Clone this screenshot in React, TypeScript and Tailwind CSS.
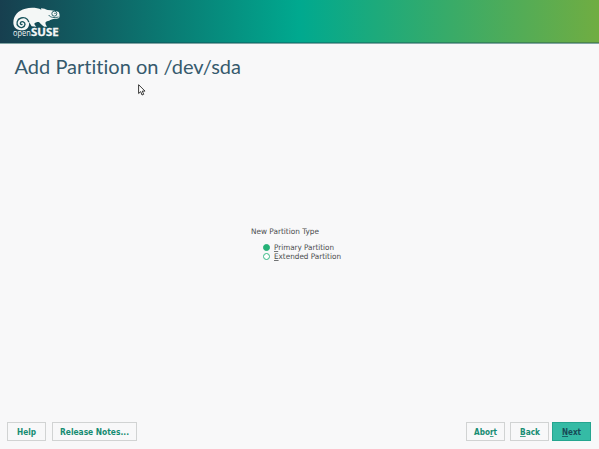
import React from 'react';

function Logo() {
  return (
    <svg className="block" width="70" height="43" viewBox="0 0 210 129" role="img" aria-label="openSUSE">
      <path
        fill="#f4f7f6"
        d="M40 68C40 47 54 31 76 26C92 22 112 23 124 29L123 25C131 25 137 28 143 30C156 31 170 33 176 36C179 41 180 50 177 54C170 58 158 55 151 60C147 64 140 63 137 66C135 71 138 76 141 80L133 80C127 77 121 71 117 66C110 66 104 68 103 71C104 75 107 77 109 80L95 79C92 75 91 71 87 67C89 79 82 90 69 91C51 92 40 82 40 68Z"
      />
      <path
        fill="none"
        stroke="#15525b"
        strokeWidth="4"
        strokeLinecap="round"
        d="M86 65C82 55 72 51 63 54C50 58 48 72 55 79C62 86 74 82 75 73C75 65 66 63 62 67C59 71 63 75 66 73"
      />
      <circle cx="163" cy="41" r="7.5" fill="none" stroke="#15525b" strokeWidth="2.6" />
      <circle cx="165" cy="40" r="2" fill="#15525b" />
      <path d="M146 45C151 53 163 54 176 51" fill="none" stroke="#15525b" strokeWidth="2.6" />
      <text x="39" y="107" textLength="53" lengthAdjust="spacingAndGlyphs" fill="#f4f7f6" className="font-['Open_Sans',sans-serif] text-[25px]">open</text>
      <text x="93" y="108" textLength="83" lengthAdjust="spacingAndGlyphs" fill="#f4f7f6" stroke="#f4f7f6" strokeWidth="0.8" className="font-['Open_Sans',sans-serif] text-[30px] font-bold">SUSE</text>
      <circle cx="179" cy="90" r="1" fill="#b9cfd0" />
    </svg>
  );
}

function Fit({ children, width, size = 8, bold = false }: { children: React.ReactNode; width: number; size?: number; bold?: boolean }) {
  return (
    <svg width={width} height="13" className="block overflow-visible" fill="currentColor">
      <text
        x="0"
        y={bold ? 10 : 9}
        textLength={width}
        lengthAdjust="spacingAndGlyphs"
        fontSize={size}
        className={bold ? "font-['DejaVu_Sans',sans-serif] font-bold" : "font-['DejaVu_Sans',sans-serif]"}
      >
        {children}
      </text>
    </svg>
  );
}

function Key({ children }: { children: string }) {
  return <tspan className="underline">{children}</tspan>;
}

function Button({ className, children }: { className: string; children: React.ReactNode }) {
  return (
    <button className={`flex h-[19px] items-center justify-center border ${className}`}>{children}</button>
  );
}

function Option({ selected = false, width, children }: { selected?: boolean; width: number; children: React.ReactNode }) {
  return (
    <label className="flex h-[9px] items-center gap-1">
      <span className={`size-[7px] rounded-full border-[1.5px] ${selected ? 'border-[#25b177] bg-[#25b177]' : 'border-[#36b985] bg-white'}`} />
      <Fit width={width} size={7.7}>{children}</Fit>
    </label>
  );
}

export default function App() {
  return (
    <div className="relative flex h-[449px] w-[599px] flex-col overflow-hidden bg-[#f8f8f9] text-[#4a4c4d]">
      <header className="h-11 shrink-0 border-b border-[#81a5a4] bg-[linear-gradient(90deg,#173f4f_0%,#00a98f_50%,#70ad42_100%)]">
        <div className="h-[43px] border-b border-[#173f4f]/35"><Logo /></div>
      </header>
      <h1 className="ml-[14px] mt-[7px] h-8 text-[#365a6d]">
        <svg width="228" height="32" className="block overflow-visible" fill="currentColor">
          <text x="0.5" y="22.5" textLength="226.5" lengthAdjust="spacingAndGlyphs" className="font-['Lato',sans-serif] text-[19.5px] [font-variant-ligatures:none]">
            Add Partition on /dev/sda
          </text>
        </svg>
      </h1>
      <main className="flex flex-1 flex-col pl-[251px] pt-[142px]">
        <Fit width={68} size={7.7}>New Partition Type</Fit>
        <div className="ml-3 mt-[5px] flex flex-col">
          <Option selected width={60}><Key>P</Key>rimary Partition</Option>
          <Option width={67}><Key>E</Key>xtended Partition</Option>
        </div>
      </main>
      <footer className="flex shrink-0 items-center pb-2 pl-[7px] pr-2 text-[#168c72]">
        <Button className="w-[39px] border-[#d1d3d3]"><Fit bold width={19}>Help</Fit></Button>
        <Button className="ml-[6px] w-[85px] border-[#d1d3d3]"><Fit bold width={69}>Release Notes...</Fit></Button>
        <div className="ml-auto flex">
          <Button className="w-[39px] border-[#d1d3d3]"><Fit bold width={23}>Abo<Key>r</Key>t</Fit></Button>
          <Button className="ml-[5px] w-[39px] border-[#d1d3d3]"><Fit bold width={20}><Key>B</Key>ack</Fit></Button>
          <Button className="ml-[3px] w-[39px] border-[#24a58f] bg-[#35bba5] text-[#174b57]"><Fit bold width={19}><Key>N</Key>ext</Fit></Button>
        </div>
      </footer>
      <svg className="absolute left-[138px] top-[84px]" width="8" height="12" viewBox="0 0 8 12">
        <path d="M.6 .7V9.5L2.7 7.6L4 11L5.7 10.3L4.3 7.1H7Z" fill="white" stroke="#222" strokeWidth=".9" />
      </svg>
    </div>
  );
}
